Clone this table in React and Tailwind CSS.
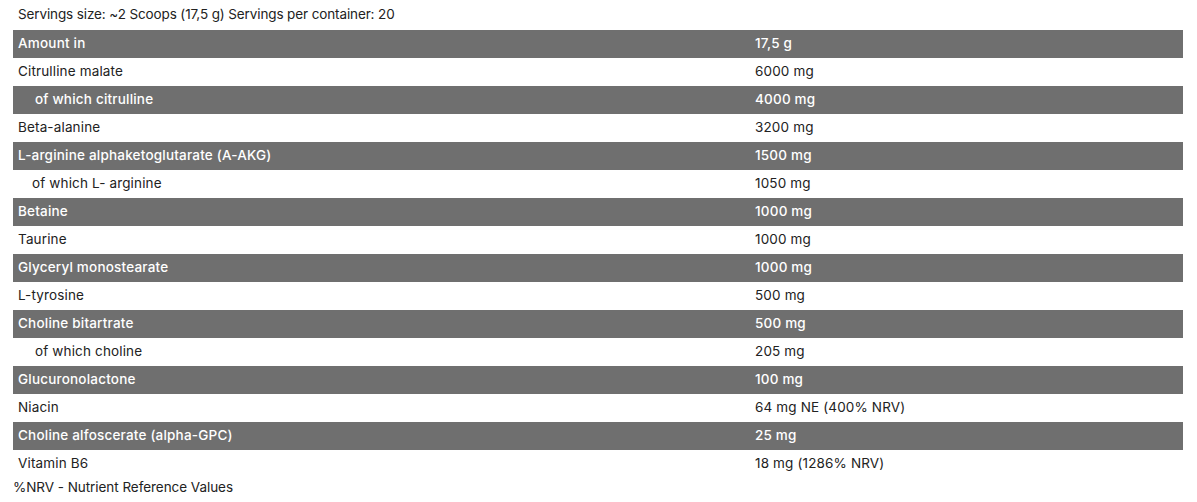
import React from "react";

const rows = [
  ["Amount in", "17,5 g", 0],
  ["Citrulline malate", "6000 mg", 0],
  ["of which citrulline", "4000 mg", 17],
  ["Beta-alanine", "3200 mg", 0],
  ["L-arginine alphaketoglutarate (A-AKG)", "1500 mg", 0],
  ["of which L- arginine", "1050 mg", 14],
  ["Betaine", "1000 mg", 0],
  ["Taurine", "1000 mg", 0],
  ["Glyceryl monostearate", "1000 mg", 0],
  ["L-tyrosine", "500 mg", 0],
  ["Choline bitartrate", "500 mg", 0],
  ["of which choline", "205 mg", 17],
  ["Glucuronolactone", "100 mg", 0],
  ["Niacin", "64 mg NE (400% NRV)", 0],
  ["Choline alfoscerate (alpha-GPC)", "25 mg", 0],
  ["Vitamin B6", "18 mg (1286% NRV)", 0],
];

export default function App() {
  return (
    <div
      className="w-[1197px] h-[502px] bg-white text-[13.5px] text-[#222]"
      style={{ fontFamily: "Inter, 'Noto Sans', sans-serif" }}
    >
      <div className="pl-[13px] pr-[14px]">
        <div className="h-[30px] flex items-center pl-[5px] pb-[1px] tracking-[-0.12px]">
          Servings size: ~2 Scoops (17,5 g) Servings per container: 20
        </div>
        <div className="flex flex-col">
          {rows.map(([label, value, indent], i) => {
            const gray = i % 2 === 0;
            return (
              <div
                key={i}
                className={
                  gray
                    ? "h-[28px] flex items-center pb-[1px] bg-[#6f6f6f] text-white font-medium tracking-[0.2px]"
                    : "h-[28px] flex items-center pb-[1px] bg-white text-[#222] tracking-[0.15px]"
                }
              >
                <div className="w-[737px] pl-[5px]">
                  <span style={{ paddingLeft: indent }}>{label}</span>
                </div>
                <div className="flex-1 pl-[5px]">{value}</div>
              </div>
            );
          })}
        </div>
        <div className="h-[18px] flex items-center tracking-[-0.05px]">%NRV - Nutrient Reference Values</div>
      </div>
    </div>
  );
}
